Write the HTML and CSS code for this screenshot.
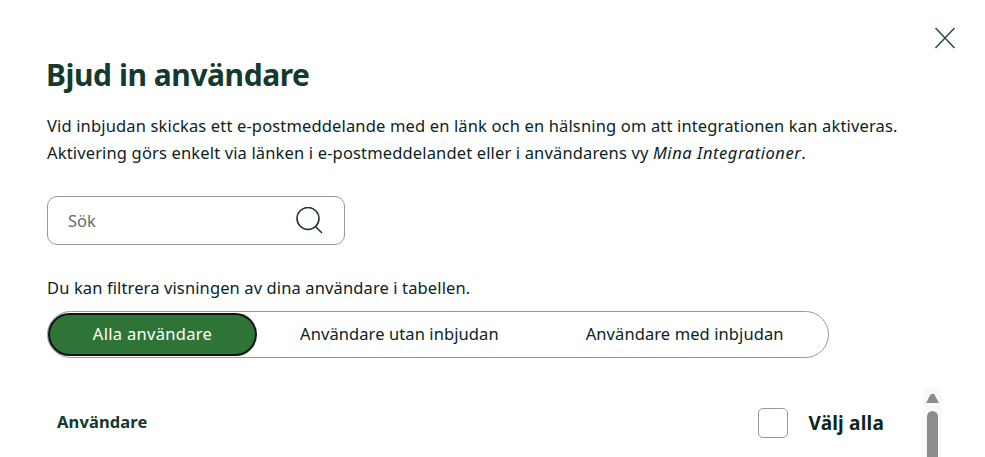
FILE: index.html
```html
<!DOCTYPE html>
<html lang="sv">
<head>
<meta charset="utf-8">
<title>Bjud in användare</title>
<link rel="stylesheet" href="styles.css">
</head>
<body>
<main class="dialog">
  <button class="close" aria-label="Stäng">
    <svg width="22" height="22" viewBox="0 0 22 22"><path d="M1.5 1 20.5 21M20.5 1 1.5 21" fill="none" stroke="#2c4a40" stroke-width="1.5"/></svg>
  </button>
  <h1 class="title">Bjud in användare</h1>
  <p class="intro">Vid inbjudan skickas ett e-postmeddelande med en länk och en hälsning om att integrationen kan aktiveras.<br>Aktivering görs enkelt via länken i e-postmeddelandet eller i användarens vy <em>Mina Integrationer</em>.</p>
  <div class="search">
    <span class="placeholder">Sök</span>
    <svg width="28" height="28" viewBox="0 0 28 28"><circle cx="12" cy="11.5" r="11" fill="none" stroke="#17332a" stroke-width="1.5"/><path d="M19.5 19.5 26 26" fill="none" stroke="#17332a" stroke-width="1.5"/></svg>
  </div>
  <p class="hint">Du kan filtrera visningen av dina användare i tabellen.</p>
  <div class="tabs">
    <span class="tab active">Alla användare</span>
    <span class="tab second">Användare utan inbjudan</span>
    <span class="tab third">Användare med inbjudan</span>
  </div>
  <div class="table">
    <div class="table-head">
      <span class="col-user">Användare</span>
      <span class="select-all"><span class="check"></span><span class="select-label">Välj alla</span></span>
    </div>
    <div class="scrollbar"><span class="arrow"></span><span class="thumb"></span></div>
  </div>
</main>
</body>
</html>
```
FILE: styles.css
```css
* { box-sizing: border-box; }
html, body { margin: 0; height: 457px; overflow: hidden; background: #fff; }
body { font-family: "Noto Sans", Roboto, sans-serif; color: #0c241d; }
.dialog { position: relative; height: 457px; padding: 57px 0 0 47px; overflow: hidden; }
.close { position: absolute; top: 27px; left: 934px; width: 22px; height: 22px; padding: 0; border: 0; background: none; display: block; }
.close svg { display: block; }
.title { margin: 0 0 0 -1px; font-size: 30px; line-height: 36px; font-weight: 700; letter-spacing: -0.45px; color: #143a2b; }
.intro { margin: 19px 0 0; font-size: 16.5px; line-height: 27px; letter-spacing: 0.15px; }
.intro em { font-style: italic; letter-spacing: 0.55px; }
.search { margin-top: 30px; width: 298px; height: 49px; border: 1px solid #999; border-radius: 10px; display: flex; align-items: center; justify-content: space-between; padding: 0 20px 0 20px; }
.search svg { display: block; }
.placeholder { font-size: 16.5px; color: #5d7268; }
.hint { margin: 33px 0 0; font-size: 16.5px; line-height: 20px; letter-spacing: 0.12px; }
.tabs { margin-top: 13px; width: 782px; height: 47px; border: 1px solid #999; border-radius: 24px; display: flex; align-items: center; font-size: 16.5px; line-height: 22px; letter-spacing: 0.09px; }
.tab { display: block; text-align: center; }
.active { width: 209px; height: 43px; line-height: 37px; letter-spacing: 0.3px; background: #2e7436; color: #fff; border: 2px solid #111; border-radius: 22px; }
.second { margin: 0 0 2px 43px; }
.third { margin: 0 0 2px 87px; }
.table { display: flex; margin-top: 30px; width: 895px; }
.table-head { flex: 1; display: flex; justify-content: space-between; align-items: center; padding: 0 39px 0 10px; height: 70px; align-self: flex-start; }
.col-user { margin-bottom: 2px; font-size: 16.5px; line-height: 20px; font-weight: 700; letter-spacing: 0.12px; color: #143a2b; }
.select-all { display: flex; align-items: center; gap: 20px; }
.check { width: 30px; height: 30px; border: 1px solid #999; border-radius: 5px; display: block; }
.select-label { font-size: 19px; line-height: 24px; font-weight: 700; letter-spacing: 0.2px; }
.scrollbar { width: 19px; height: 100px; background: #f9f9f9; display: flex; flex-direction: column; align-items: center; padding-top: 6px; }
.arrow { width: 13px; height: 9px; background: #8c8c8c; clip-path: polygon(38% 0, 62% 0, 100% 100%, 0 100%); }
.thumb { margin-top: 8px; width: 11px; flex: 1; background: #8c8c8c; border-radius: 6px 6px 0 0; }
```
